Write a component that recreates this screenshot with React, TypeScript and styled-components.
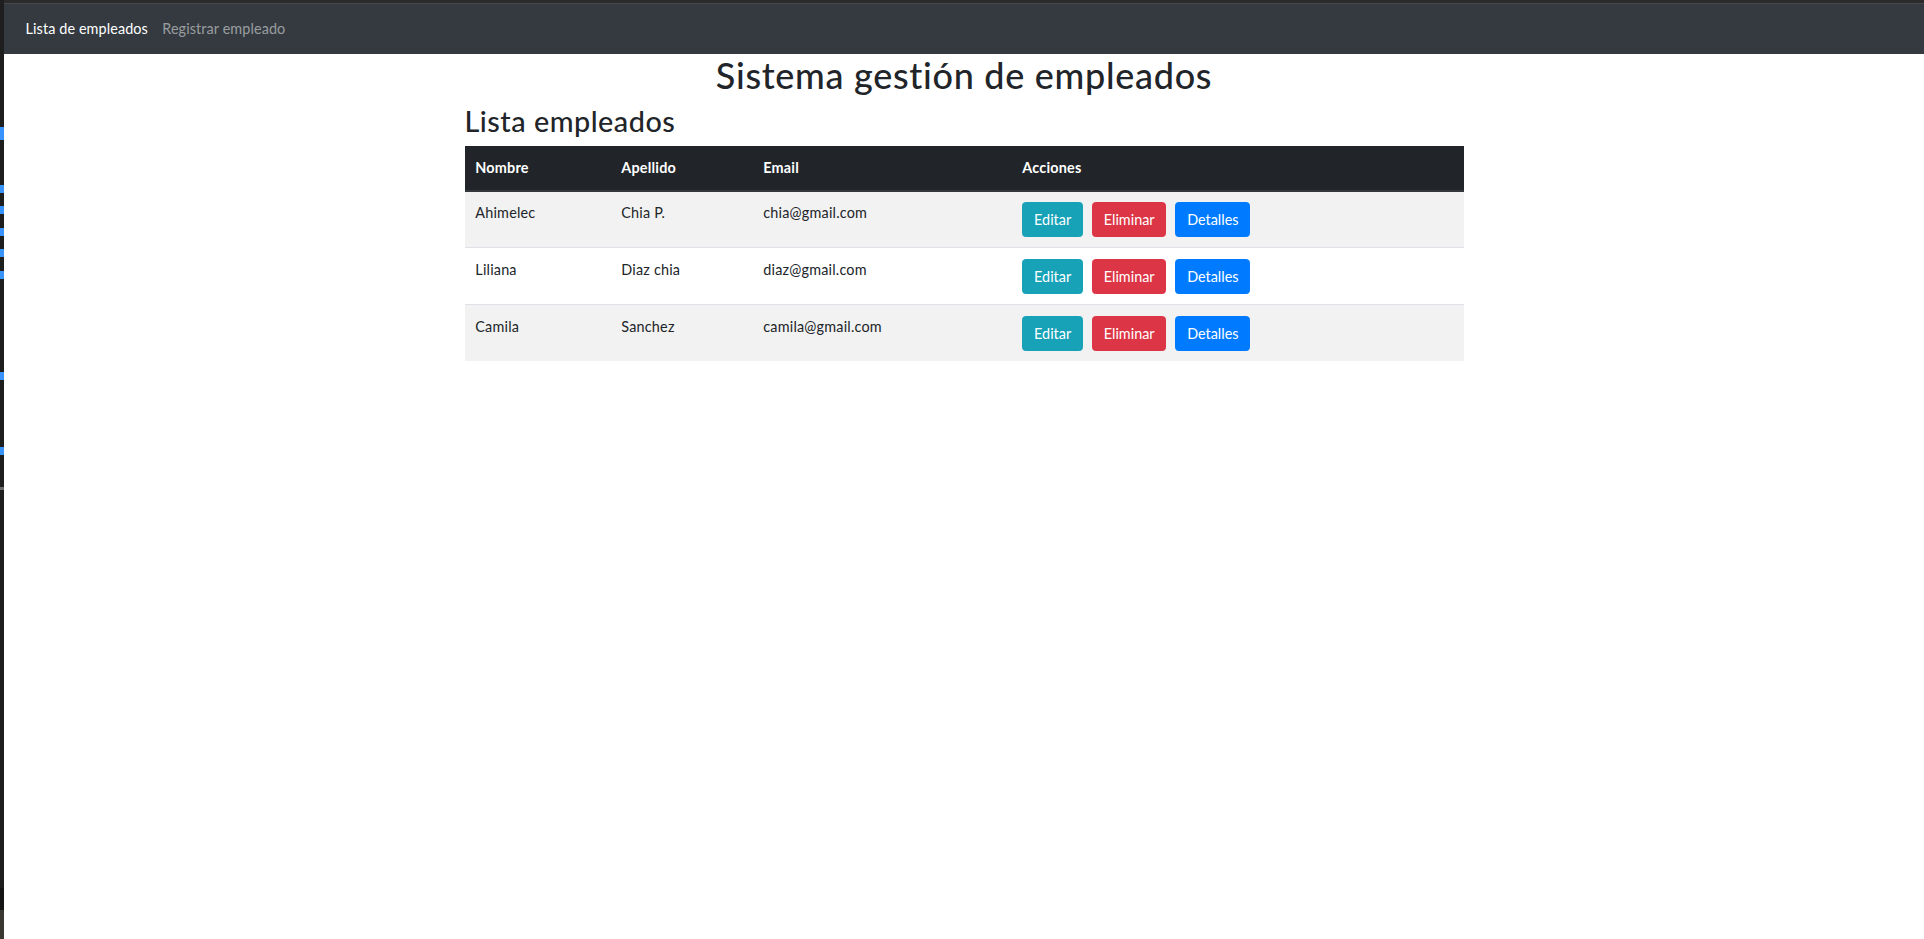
import styled, { createGlobalStyle } from "styled-components";

const GlobalStyle = createGlobalStyle`
  html, body {
    margin: 0;
    padding: 0;
    background: #ffffff;
  }
  body {
    font-family: Lato, "Noto Sans", sans-serif;
    color: #212529;
    overflow: hidden;
  }
`;

const Screen = styled.div`
  display: flex;
  width: 1924px;
  height: 939px;
  overflow: hidden;
`;

const Gutter = styled.div`
  position: relative;
  width: 4px;
  flex-shrink: 0;
  background: #1e1e1e;
  display: flex;
  flex-direction: column;
  justify-content: flex-end;
`;

const GutterFoot = styled.div`
  height: 29px;
  background: #3a3733;
  border-top: 22px solid #141414;
`;

const Marker = styled.span<{ $gray?: boolean }>`
  position: absolute;
  left: 0;
  width: 4px;
  background: ${(p) => (p.$gray ? "#6b6b6b" : "#3794ff")};
`;

const Main = styled.div`
  flex: 1;
  display: flex;
  flex-direction: column;
`;

const TopStrip = styled.div`
  height: 3px;
  background: #2b2b2b;
`;

const Navbar = styled.nav`
  height: 51px;
  box-sizing: border-box;
  background: #343a40;
  border-top: 1px solid #45494e;
  display: flex;
  align-items: center;
  padding: 0 14.4px;
`;

const NavLink = styled.a<{ $active?: boolean }>`
  padding: 0 7.2px;
  font-size: 14.4px;
  line-height: 21.6px;
  letter-spacing: 0.1px;
  color: ${(p) => (p.$active ? "#ffffff" : "rgba(255, 255, 255, 0.5)")};
  text-decoration: none;
  cursor: pointer;
`;

const Container = styled.div`
  width: 1026px;
  box-sizing: border-box;
  margin: 0 auto;
  padding: 0 13.5px;
`;

const Title = styled.h1`
  margin: 0 0 7.2px;
  font-size: 36px;
  font-weight: 500;
  line-height: 1.2;
  letter-spacing: 0.7px;
  text-align: center;
`;

const Subtitle = styled.h2`
  margin: 0 0 7.4px;
  font-size: 28.8px;
  font-weight: 500;
  line-height: 1.2;
  letter-spacing: 0.5px;
`;

const Table = styled.table`
  width: 100%;
  table-layout: fixed;
  border-collapse: collapse;
  font-size: 14.4px;
  line-height: 21.6px;
  letter-spacing: 0.2px;
`;

const HeadCell = styled.th<{ $w?: number }>`
  width: ${(p) => (p.$w ? `${p.$w}px` : "auto")};
  box-sizing: border-box;
  padding: 10.8px;
  text-align: left;
  font-weight: 700;
  color: #ffffff;
  background: #212529;
  border-bottom: 2px solid #32383e;
`;

const Row = styled.tr<{ $striped?: boolean }>`
  background: ${(p) => (p.$striped ? "#f2f2f2" : "#ffffff")};
  border-top: 1px solid #dee2e6;
`;

const Cell = styled.td`
  padding: 10.8px;
  vertical-align: top;
`;

const Actions = styled.div`
  display: flex;
  gap: 9px;
`;

const Button = styled.button<{ $color: string }>`
  padding: 5.4px 10.8px;
  font-family: inherit;
  font-size: 14.4px;
  line-height: 21.6px;
  color: #ffffff;
  background: ${(p) => p.$color};
  border: 1px solid ${(p) => p.$color};
  border-radius: 3.6px;
  cursor: pointer;
`;

const employees = [
  { nombre: "Ahimelec", apellido: "Chia P.", email: "chia@gmail.com" },
  { nombre: "Liliana", apellido: "Diaz chia", email: "diaz@gmail.com" },
  { nombre: "Camila", apellido: "Sanchez", email: "camila@gmail.com" },
];

const markers = [
  { top: 127, h: 13 },
  { top: 185, h: 8 },
  { top: 206, h: 8 },
  { top: 228, h: 8 },
  { top: 249, h: 8 },
  { top: 271, h: 8 },
  { top: 372, h: 8 },
  { top: 447, h: 8 },
];

function App() {
  return (
    <>
      <GlobalStyle />
      <Screen>
        <Gutter>
          {markers.map((m) => (
            <Marker key={m.top} style={{ top: m.top, height: m.h }} />
          ))}
          <Marker $gray style={{ top: 487, height: 3 }} />
          <GutterFoot />
        </Gutter>
        <Main>
          <TopStrip />
          <Navbar>
            <NavLink $active>Lista de empleados</NavLink>
            <NavLink>Registrar empleado</NavLink>
          </Navbar>
          <Container>
            <Title>Sistema gestión de empleados</Title>
            <Subtitle>Lista empleados</Subtitle>
            <Table>
              <thead>
                <tr>
                  <HeadCell $w={146}>Nombre</HeadCell>
                  <HeadCell $w={142}>Apellido</HeadCell>
                  <HeadCell $w={259}>Email</HeadCell>
                  <HeadCell>Acciones</HeadCell>
                </tr>
              </thead>
              <tbody>
                {employees.map((e, i) => (
                  <Row key={e.email} $striped={i % 2 === 0}>
                    <Cell>{e.nombre}</Cell>
                    <Cell>{e.apellido}</Cell>
                    <Cell>{e.email}</Cell>
                    <Cell>
                      <Actions>
                        <Button $color="#17a2b8">Editar</Button>
                        <Button $color="#dc3545">Eliminar</Button>
                        <Button $color="#007bff">Detalles</Button>
                      </Actions>
                    </Cell>
                  </Row>
                ))}
              </tbody>
            </Table>
          </Container>
        </Main>
      </Screen>
    </>
  );
}

export default App;
